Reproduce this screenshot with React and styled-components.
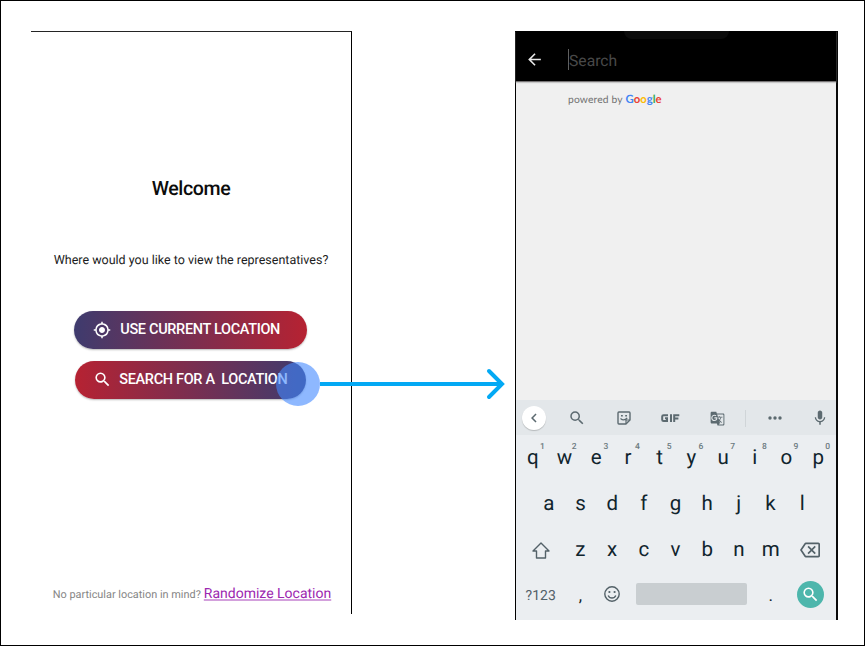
import React from 'react';
import styled, { createGlobalStyle } from 'styled-components';
import {
  MdMyLocation, MdSearch, MdArrowBack, MdChevronLeft, MdGTranslate,
  MdMic, MdOutlineBackspace,
} from 'react-icons/md';

const Global = createGlobalStyle`
  * { box-sizing: border-box; }
  body { margin: 0; background: #fff; font-family: Roboto, "Liberation Sans", sans-serif; text-rendering: geometricPrecision; }
`;

const Board = styled.main`
  position: relative;
  display: flex;
  width: 865px;
  height: 646px;
  padding: 30px 0 0 30px;
  border: 1px solid #000;
  background: #fff;
  overflow: hidden;
`;

const WelcomeScreen = styled.section`
  display: flex;
  flex-direction: column;
  align-items: center;
  width: 321px;
  height: 583px;
  border-top: 1px solid #242424;
  border-right: 1px solid #000;
`;

const Title = styled.h1`
  margin: 143px 0 0;
  font-size: 19.6px;
  line-height: 27px;
  font-weight: 500;
  letter-spacing: -0.4px;
  color: #0c0c0c;
`;

const Question = styled.p`
  margin: 48px 0 0;
  font-size: 12.5px;
  line-height: 21px;
  white-space: nowrap;
  color: #1c1c1c;
`;

const Actions = styled.div`
  display: flex;
  flex-direction: column;
  align-items: center;
  gap: 12px;
  margin: 39.5px 0.5px 0 0;
`;

const Pill = styled.button`
  display: flex;
  align-items: center;
  gap: ${(p) => p.$gap}px;
  width: ${(p) => p.$width}px;
  height: 38px;
  padding: 0 0 0 ${(p) => p.$inset}px;
  border: 0;
  border-radius: 19px;
  background: linear-gradient(90deg, ${(p) => p.$from}, ${(p) => p.$to});
  box-shadow: 0 1px 2px rgba(0, 0, 0, 0.28);
  color: #fff;
  font: 500 14.5px/38px Roboto, sans-serif;
  letter-spacing: -0.33px;
  white-space: pre;
`;

const Footer = styled.p`
  display: flex;
  align-items: baseline;
  gap: 3px;
  margin: 184px 0 0 2px;
  font-size: 10.9px;
  line-height: 22px;
  white-space: nowrap;
  color: #858585;
`;

const RandomLink = styled.a`
  font-size: 14px;
  color: #9c27b0;
  text-decoration: underline;
  text-decoration-color: #d3a0dc;
  text-decoration-thickness: 2px;
  text-underline-offset: 1px;
`;

const SearchScreen = styled.section`
  display: flex;
  flex-direction: column;
  width: 323px;
  height: 589px;
  margin-left: 163px;
  border-left: 1px solid #000;
  border-right: 2px solid #0a0a0a;
  background: #f0f0f0;
`;

const SearchBar = styled.header`
  display: flex;
  align-items: center;
  position: relative;
  height: 51px;
  flex: none;
  padding: 7px 0 0 9px;
  background: #000;
  border-bottom: 1px solid #777475;
  box-shadow: 0 1px 1px #c8c8c8;
  color: #e8e8e8;
`;

const Notch = styled.div`
  position: absolute;
  top: 0;
  left: 108px;
  width: 105px;
  height: 8px;
  border-radius: 0 0 14px 14px;
  background: #0b0b0b;
`;

const SearchField = styled.div`
  height: 21px;
  margin-left: 24px;
  border-left: 1px solid #606060;
  color: #484848;
  font-size: 15.7px;
  line-height: 23px;
`;

const Results = styled.div`
  flex: 1;
  padding: 11px 0 0 52px;
`;

const PoweredBy = styled.div`
  display: flex;
  align-items: baseline;
  gap: 3px;
  font: 400 10.3px/14px Lato, sans-serif;
  letter-spacing: 0.13px;
  color: #727272;
`;

const Brand = styled.span`
  font-size: 11.3px;
  font-weight: 700;
  letter-spacing: 0;
`;

const Letter = styled.span`
  color: ${(p) => p.$color};
`;

const Keyboard = styled.div`
  flex: none;
  height: 220px;
  background: #ebeef1;
  color: #10242d;
`;

const Toolbar = styled.div`
  display: grid;
  grid-template-columns: 35px 52px 42px 50px 45px 11px 47px 39px;
  align-items: center;
  justify-items: center;
  height: 35px;
  padding-top: 1px;
  background: #e3e7ea;
  color: #5c6a70;
`;

const BackCircle = styled.span`
  display: grid;
  place-items: center;
  width: 24px;
  height: 24px;
  border-radius: 50%;
  background: #fff;
  box-shadow: 0 1px 1px rgba(0, 0, 0, 0.2);
`;

const MicSlot = styled.span`
  display: flex;
  padding-left: 5px;
`;

const Divider = styled.span`
  width: 1px;
  height: 17px;
  background: #d0d5d8;
`;

const KeyRow = styled.div`
  display: grid;
  grid-template-columns: ${(p) => p.$columns};
  height: ${(p) => p.$height || 46}px;
  padding: 0 ${(p) => p.$side || 2}px 0 ${(p) => (p.$side || 2) - 1}px;
`;

const Key = styled.div`
  position: relative;
  display: grid;
  place-items: center;
  height: ${(p) => (p.$control ? 44 : 46)}px;
  font-size: 20.5px;
  line-height: 46px;
  color: ${(p) => p.$tint || '#10242d'};
`;

const Hint = styled.sup`
  position: absolute;
  top: 7px;
  left: 23px;
  font-size: 8.5px;
  line-height: 10px;
  font-weight: 500;
  color: #6c7a80;
`;

const ModeLabel = styled.span`
  font-size: 14px;
  letter-spacing: 0.1px;
  padding-top: 1px;
`;

const Punctuation = styled.span`
  font-size: 17px;
  padding-top: 1px;
`;

const SpaceBar = styled.div`
  align-self: center;
  width: 111px;
  height: 22px;
  border-radius: 2px;
  background: #c9ced1;
`;

const GoButton = styled.span`
  display: grid;
  place-items: center;
  width: 27px;
  height: 27px;
  border-radius: 50%;
  background: #4db6ac;
  color: #fff;
`;

const TouchPoint = styled.div`
  position: absolute;
  left: 275px;
  top: 361px;
  width: 44px;
  height: 44px;
  border-radius: 50%;
  background: rgba(67, 137, 255, 0.6);
`;

const FlowArrow = styled.svg`
  position: absolute;
  left: 319px;
  top: 365px;
`;

const StickerIcon = () => (
  <svg width="14" height="14" viewBox="0 0 14 14" fill="none" stroke="currentColor" strokeWidth="1.4">
    <path d="M1.9 1h10.2q.9 0 .9.9v7L8.9 13h-7q-.9 0-.9-.9V1.9Q1 1 1.9 1Z" />
    <path d="M13 9H9v4M3.5 7.5Q6.8 10.5 10.2 7" strokeWidth="1.2" />
    <path d="M4 4.7h1.8M8.2 4.7H10" strokeWidth="1.5" />
  </svg>
);

const GifIcon = () => (
  <svg width="19" height="9" viewBox="0 0 19 9" fill="none" stroke="currentColor" strokeWidth="2">
    <path d="M7 1.3H2.6Q1.2 1.3 1.2 2.6v3.1Q1.2 7 2.6 7H6V4.2H4M10 .3V8M13.2 8V1.3H18.3M13.2 4.5H17.4" />
  </svg>
);

const ShiftIcon = () => (
  <svg width="18" height="17" viewBox="0 0 18 17" fill="none" stroke="currentColor" strokeWidth="1.4" strokeLinejoin="round">
    <path d="M9 1 1 9h3.5v7h9V9H17Z" />
  </svg>
);

const SmileIcon = () => (
  <svg width="16" height="16" viewBox="0 0 16 16" fill="none" stroke="currentColor" strokeWidth="1.4">
    <circle cx="8" cy="8" r="7.2" />
    <path d="M4.2 9.4Q5.3 12 8 12t3.8-2.6" />
    <circle cx="5.4" cy="6" r="1.1" fill="currentColor" stroke="none" />
    <circle cx="10.6" cy="6" r="1.1" fill="currentColor" stroke="none" />
  </svg>
);

const MoreIcon = () => (
  <svg width="14" height="4" viewBox="0 0 14 4" fill="currentColor">
    <circle cx="2" cy="2" r="1.7" /><circle cx="7" cy="2" r="1.7" /><circle cx="12" cy="2" r="1.7" />
  </svg>
);

const brand = [
  ['G', '#4285f4'], ['o', '#ea4335'], ['o', '#fbbc05'],
  ['g', '#4285f4'], ['l', '#34a853'], ['e', '#ea4335'],
];

const muted = '#536168';

export default function App() {
  return (
    <>
      <Global />
      <Board>
        <WelcomeScreen>
          <Title>Welcome</Title>
          <Question>Where would you like to view the representatives?</Question>
          <Actions>
            <Pill $from="#3e3b6e" $to="#b62232" $width={233} $inset={19} $gap={9}>
              <MdMyLocation size={18} /><span>USE CURRENT LOCATION</span>
            </Pill>
            <Pill $from="#b62232" $to="#3e3b6e" $width={231} $inset={18} $gap={7}>
              <MdSearch size={19} /><span>{'SEARCH FOR A  LOCATION'}</span>
            </Pill>
          </Actions>
          <Footer>
            No particular location in mind? <RandomLink>Randomize Location</RandomLink>
          </Footer>
        </WelcomeScreen>

        <SearchScreen>
          <SearchBar>
            <Notch />
            <MdArrowBack size={19} />
            <SearchField>Search</SearchField>
          </SearchBar>
          <Results>
            <PoweredBy>
              powered by
              <Brand>{brand.map(([c, color], i) => <Letter key={i} $color={color}>{c}</Letter>)}</Brand>
            </PoweredBy>
          </Results>
          <Keyboard>
            <Toolbar>
              <BackCircle><MdChevronLeft size={18} /></BackCircle>
              <MdSearch size={18} />
              <StickerIcon />
              <GifIcon />
              <MdGTranslate size={15} />
              <Divider />
              <MoreIcon />
              <MicSlot><MdMic size={18} /></MicSlot>
            </Toolbar>
            <KeyRow $columns="repeat(10, 1fr)">
              {[...'qwertyuiop'].map((k, i) => (
                <Key key={k}>{k}<Hint>{(i + 1) % 10}</Hint></Key>
              ))}
            </KeyRow>
            <KeyRow $columns="repeat(9, 1fr)" $side={18}>
              {[...'asdfghjkl'].map((k) => <Key key={k}>{k}</Key>)}
            </KeyRow>
            <KeyRow $columns="47.5px repeat(7, 1fr) 47.5px" $height={45}>
              <Key $tint={muted}><ShiftIcon /></Key>
              {[...'zxcvbnm'].map((k) => <Key key={k}>{k}</Key>)}
              <Key $tint={muted}><MdOutlineBackspace size={20} /></Key>
            </KeyRow>
            <KeyRow $columns="47.5px 31.7px 31.7px 127px 31.7px 47.5px">
              <Key $control $tint={muted}><ModeLabel>?123</ModeLabel></Key>
              <Key $control><Punctuation>,</Punctuation></Key>
              <Key $control $tint={muted}><SmileIcon /></Key>
              <Key $control><SpaceBar /></Key>
              <Key $control><Punctuation>.</Punctuation></Key>
              <Key $control><GoButton><MdSearch size={19} /></GoButton></Key>
            </KeyRow>
          </Keyboard>
        </SearchScreen>

        <TouchPoint />
        <FlowArrow width="187" height="36" viewBox="0 0 187 36" fill="none" stroke="#03a9f4" strokeWidth="4">
          <path d="M0 18H181" />
          <path d="M169 5 182 18 169 31" strokeLinecap="round" strokeLinejoin="miter" />
        </FlowArrow>
      </Board>
    </>
  );
}
